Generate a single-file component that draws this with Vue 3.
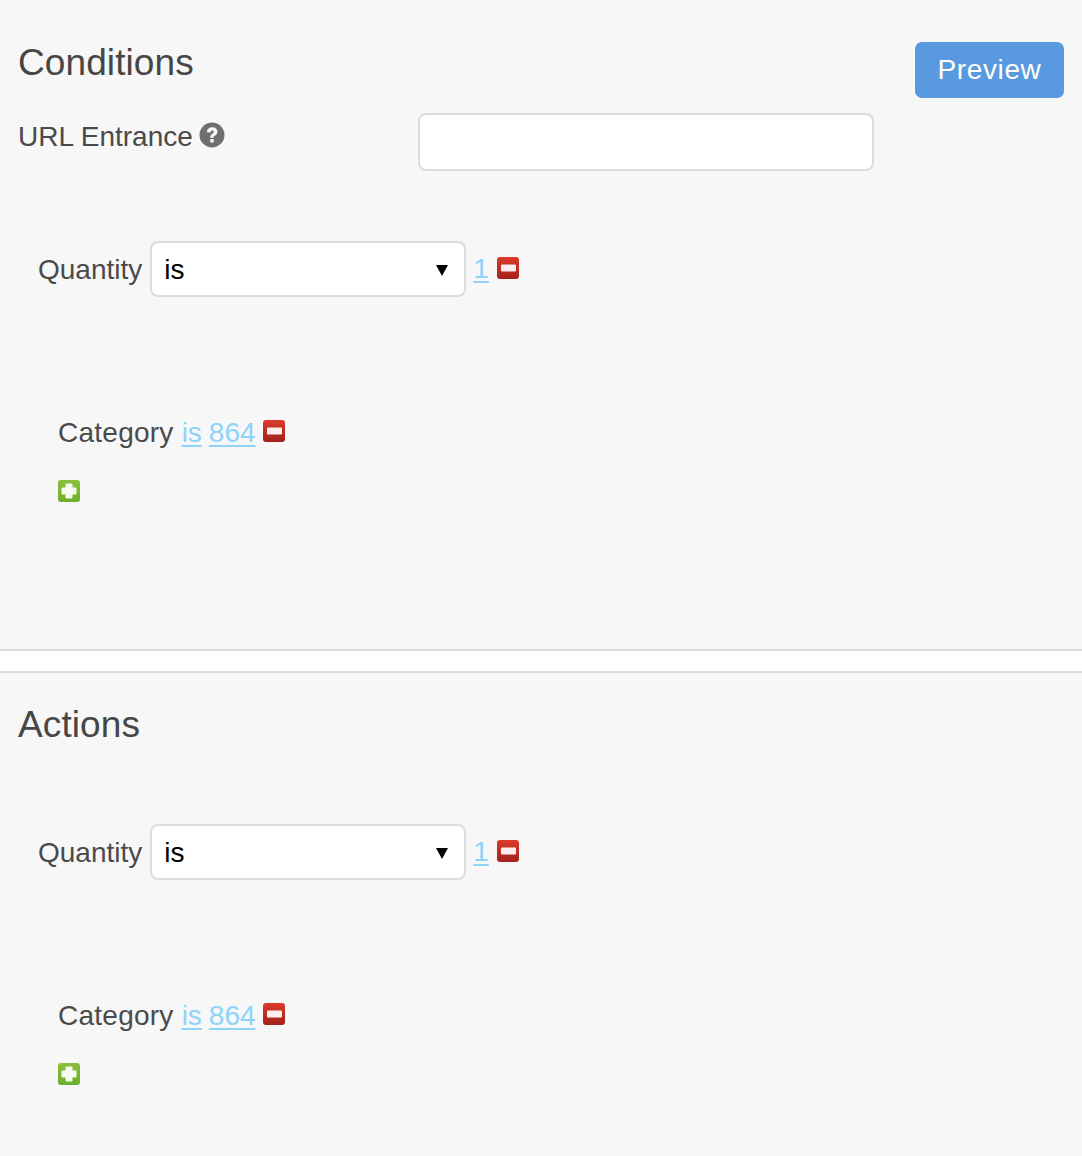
<script setup>
const sections = [
  { title: 'Conditions', entrance: true },
  { title: 'Actions', entrance: false },
]
</script>

<template>
  <main class="page">
    <template v-for="(section, i) in sections" :key="section.title">
      <div v-if="i > 0" class="band"></div>
      <section class="section" :class="section.entrance ? 'first' : 'second'">
        <div class="head">
          <h2 class="title">{{ section.title }}</h2>
          <button v-if="section.entrance" class="preview" type="button">Preview</button>
        </div>
        <div v-if="section.entrance" class="entrance">
          <label class="entrance-label">
            URL Entrance
            <svg class="help" viewBox="0 0 26 26" width="26" height="26" aria-hidden="true">
              <circle cx="13" cy="13" r="12.5" fill="#6f6f6f" />
              <path d="M7.8 10.200c.2-3.300 2.400-5 5.400-5 3.100 0 5.300 1.800 5.300 4.500 0 2-1.100 3-2.400 3.800-1.200.8-1.400 1.200-1.400 2.300h-3.400c-.1-2.200.6-3.200 2-4.100 1-.7 1.500-1.100 1.500-1.800 0-.8-.6-1.300-1.500-1.300-1 0-1.700.7-1.800 1.800z" fill="#f7f7f7" />
              <rect x="11.300" y="17" width="3.400" height="3.400" rx=".5" fill="#f7f7f7" />
            </svg>
          </label>
          <input class="url-input" type="text" />
        </div>

        <div class="quantity">
          <span class="quantity-label">Quantity</span>
          <div class="select-wrap">
            <select class="select"><option>is</option></select>
            <span class="arrow"></span>
          </div>
          <a class="link value" href="#">1</a>
          <svg class="icon" viewBox="0 0 22 22" width="22" height="22" aria-hidden="true">
            <defs>
              <linearGradient :id="`red-${i}`" x1="0" y1="0" x2="0" y2="1">
                <stop offset="0" stop-color="#dd3a2b" />
                <stop offset="1" stop-color="#a3211b" />
              </linearGradient>
            </defs>
            <rect width="22" height="22" rx="3" :fill="`url(#red-${i})`" />
            <rect x="4" y="7.500" width="15" height="7" rx="1" fill="#fbeeee" />
          </svg>
        </div>

        <div class="category">
          <span class="category-label">Category</span>
          <a class="link" href="#">is</a>
          <a class="link" href="#">864</a>
          <svg class="icon" viewBox="0 0 22 22" width="22" height="22" aria-hidden="true">
            <rect width="22" height="22" rx="3" :fill="`url(#red-${i})`" />
            <rect x="4" y="7.500" width="15" height="7" rx="1" fill="#fbeeee" />
          </svg>
        </div>

        <div class="add">
          <svg class="icon" viewBox="0 0 22 22" width="22" height="22" aria-hidden="true">
            <defs>
              <linearGradient :id="`green-${i}`" x1="0" y1="0" x2="0" y2="1">
                <stop offset="0" stop-color="#8cbf3a" />
                <stop offset="1" stop-color="#6bb02c" />
              </linearGradient>
            </defs>
            <rect width="22" height="22" rx="3" :fill="`url(#green-${i})`" />
            <path d="M7.500 4.500a1 1 0 0 1 1-1h5a1 1 0 0 1 1 1v3h3a1 1 0 0 1 1 1v5a1 1 0 0 1-1 1h-3v3a1 1 0 0 1-1 1h-5a1 1 0 0 1-1-1v-3h-3a1 1 0 0 1-1-1v-5a1 1 0 0 1 1-1h3z" fill="#f6faf0" />
          </svg>
        </div>
      </section>
    </template>
  </main>
</template>

<style>
html, body { margin: 0; background: #f7f7f7; }
</style>

<style scoped>
.page {
  width: 1082px;
  height: 1156px;
  overflow: hidden;
  background: #f7f7f7;
  color: #4a4a4a;
  font-family: "Liberation Sans", Arial, sans-serif;
  font-size: 28px;
  line-height: 40px;
}
.section { padding-left: 18px; padding-right: 18px; box-sizing: border-box; }
.first { height: 649px; padding-top: 42px; }
.second { padding-top: 31px; }
.band {
  height: 20px;
  background: #fff;
  border-top: 2px solid #dcdcdc;
  border-bottom: 2px solid #dcdcdc;
}
.head { display: flex; justify-content: space-between; align-items: flex-start; }
.title { margin: 0; font-size: 37px; line-height: 42px; font-weight: 400; color: #464646; letter-spacing: 0.1px; }
.preview {
  width: 149px;
  height: 56px;
  padding: 0;
  border: 0;
  border-radius: 7px;
  background: #5899e0;
  color: #fff;
  font: 400 28px "Liberation Sans", Arial, sans-serif;
  letter-spacing: 0.6px;
}
.entrance { display: flex; align-items: flex-start; margin-top: 15px; }
.entrance-label { display: flex; align-items: flex-start; width: 400px; gap: 6px; height: 40px; white-space: nowrap; margin-top: 4px; }
.help { margin-top: 5px; }
.url-input {
  width: 456px;
  height: 58px;
  box-sizing: border-box;
  border: 2px solid #dcdcdc;
  border-radius: 8px;
  background: #fff;
}
.quantity { display: flex; align-items: center; margin: 70px 0 0 20px; height: 56px; }
.second .quantity { margin-top: 78px; }
.quantity-label { position: relative; top: 1px; }
.select-wrap { position: relative; margin-left: 8px; }
.select {
  display: block;
  appearance: none;
  width: 316px;
  height: 56px;
  box-sizing: border-box;
  padding: 0 12px;
  border: 2px solid #dcdcdc;
  border-radius: 8px;
  background: #fff;
  color: #000;
  font: 400 28px "Liberation Sans", Arial, sans-serif;
}
.arrow {
  position: absolute;
  left: 286px;
  top: 24px;
  border-left: 6px solid transparent;
  border-right: 6px solid transparent;
  border-top: 11px solid #000;
  pointer-events: none;
}
.link { color: #8fd3fb; text-decoration: underline; text-underline-offset: 3px; }
.value { margin-left: 7px; min-width: 16px; }
.quantity .icon { margin-left: 8px; margin-top: -3px; }
.category { display: flex; align-items: center; gap: 7px; margin: 116px 0 0 40px; height: 40px; }
.category-label { letter-spacing: 0.25px; margin-right: 1px; }
.category .icon { margin-top: -5px; }
.add { margin: 27px 0 0 40px; height: 22px; }
.icon { display: block; flex: none; }
</style>
